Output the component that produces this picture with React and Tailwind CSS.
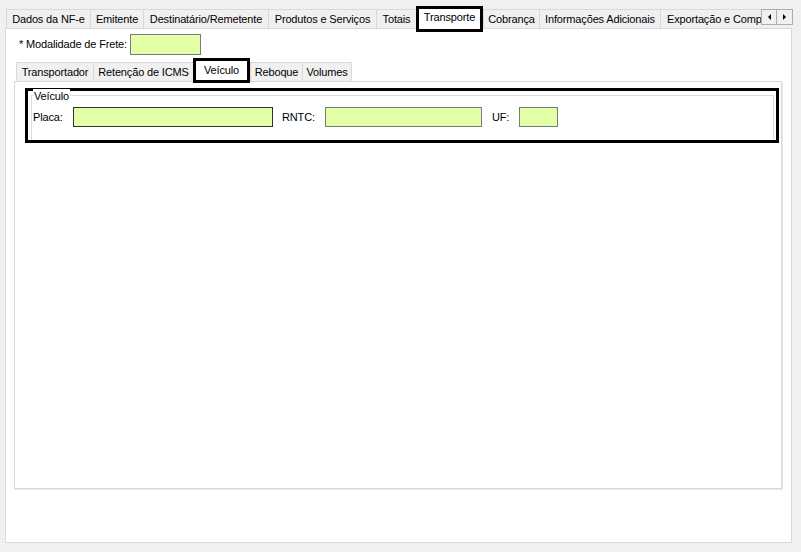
import React from "react";

const FONT = { fontFamily: '"Liberation Sans", Arial, sans-serif' };

function Tab({ label, w, last, clip }) {
  return (
    <div
      className={`h-[19px] shrink-0 border-t border-l border-[#d9d9d9] bg-[#f0f0f0] flex items-center leading-[18px] whitespace-nowrap ${last ? "border-r" : ""} ${clip ? "overflow-hidden pl-[6px]" : "justify-center"}`}
      style={{ width: w }}
    >
      {label}
    </div>
  );
}

function SelTab({ label, w, h, pt }) {
  return (
    <div
      className={`relative z-10 shrink-0 border-[3px] border-black bg-white flex justify-center leading-[14px] whitespace-nowrap ${h} ${pt}`}
      style={{ width: w }}
    >
      {label}
    </div>
  );
}

function Field({ w, dark }) {
  return (
    <div
      className={`h-[20px] shrink-0 bg-[#e2fea6] border ${dark ? "border-[#333333]" : "border-[#7a7a7a]"}`}
      style={{ width: w }}
    />
  );
}

export default function App() {
  return (
    <div
      className="w-[801px] h-[552px] bg-[#f0f0f0] text-[11px] text-black overflow-hidden tracking-[-0.15px]"
      style={FONT}
    >
      {/* outer tab strip */}
      <div className="flex items-end h-[22px] mt-[6px] pl-[6px]">
        <Tab label="Dados da NF-e" w={84} />
        <Tab label="Emitente" w={53} />
        <Tab label="Destinatário/Remetente" w={125} />
        <Tab label="Produtos e Serviços" w={108} />
        <Tab label="Totais" w={40} />
        <SelTab label="Transporte" w={67} h="h-[26px] -mb-[4px]" pt="pt-[1px]" />
        <Tab label="Cobrança" w={56} />
        <Tab label="Informações Adicionais" w={121} />
        <Tab label="Exportação e Compras" w={101} clip />
        <div className="self-start mt-[3px] flex">
          <div className="w-[16px] h-[16px] border border-[#adadad] bg-[#f0f0f0] flex items-center justify-center">
            <div className="w-0 h-0 border-y-[3px] border-y-transparent border-r-[3px] border-r-black" />
          </div>
          <div className="w-[16px] h-[16px] border border-l-0 border-[#adadad] bg-[#f0f0f0] flex items-center justify-center">
            <div className="w-0 h-0 border-y-[3px] border-y-transparent border-l-[3px] border-l-black" />
          </div>
        </div>
      </div>

      {/* outer panel */}
      <div className="ml-[5px] w-[787px] h-[515px] bg-white border border-[#d9d9d9]">
        <div className="flex items-center mt-[5px] pl-[13px] h-[21px]">
          <span className="w-[111px] whitespace-nowrap">* Modalidade de Frete:</span>
          <div className="w-[71px] h-[21px] bg-[#e2fea6] border border-[#7a7a7a]" />
        </div>

        {/* inner tab strip */}
        <div className="flex items-end h-[23px] mt-[3px] ml-[10px]">
          <Tab label="Transportador" w={77} />
          <Tab label="Retenção de ICMS" w={100} />
          <SelTab label="Veículo" w={57} h="h-[25px] -mb-[2px]" pt="pt-[2px]" />
          <Tab label="Reboque" w={52} />
          <Tab label="Volumes" w={50} last />
        </div>

        {/* inner panel */}
        <div className="ml-[8px] w-[768px] h-[408px] bg-white border border-[#d9d9d9] shadow-[1px_1px_0_#e8e8e8]">
          <div className="ml-[10px] mt-[6px] w-[754px] h-[55px] border-[3px] border-black">
            <div className="relative mt-[4px] ml-[3px] mr-[2px] h-[45px] border border-b-0 border-[#dcdcdc]">
              <span className="absolute left-[1px] -top-[7px] bg-white px-[1px] leading-[14px]">Veículo</span>
              <div className="flex items-center pt-[11px] pl-[1px]">
                <span className="w-[40px]">Placa:</span>
                <Field w={200} dark />
                <span className="w-[52px] pl-[9px]">RNTC:</span>
                <Field w={157} />
                <span className="w-[37px] pl-[10px]">UF:</span>
                <Field w={39} />
              </div>
            </div>
          </div>
        </div>
      </div>
    </div>
  );
}
